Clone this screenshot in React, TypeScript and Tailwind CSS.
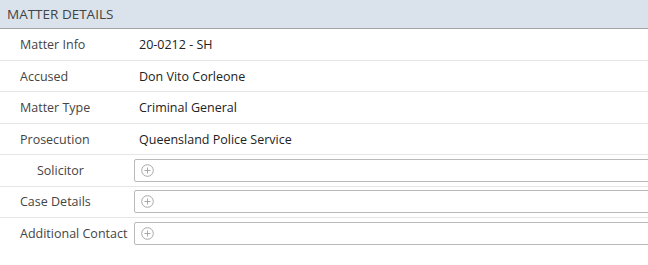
const PlusIcon = () => (
  <svg width="13" height="13" viewBox="0 0 13 13" className="shrink-0">
    <circle cx="6.5" cy="6.5" r="5.8" fill="none" stroke="#a8a8a8" strokeWidth="1" />
    <path d="M6.5 3.5v6M3.5 6.5h6" stroke="#a8a8a8" strokeWidth="1" />
  </svg>
);

const TextRow = ({ label, value }: { label: string; value: string }) => (
  <div className="flex h-[31.5px] items-center border-b border-[#e6e6e6] pt-[3px]">
    <div className="w-[139px] pl-[20px] text-[#444]">{label}</div>
    <div className="text-[#222]">{value}</div>
  </div>
);

const AddRow = ({ label, indent, last }: { label: string; indent?: boolean; last?: boolean }) => (
  <div className={`flex h-[31.5px] items-center ${last ? "" : "border-b border-[#e6e6e6]"}`}>
    <div className={`w-[134px] pt-[2px] text-[#444] ${indent ? "pl-[37px]" : "pl-[20px]"}`}>{label}</div>
    <div className="flex h-[23px] flex-1 items-center rounded-[2px] border border-[#b9b9b9] pl-[6px] -mr-[4px]">
      <PlusIcon />
    </div>
  </div>
);

const App = () => {
  return (
    <div className="h-[265px] w-[648px] overflow-hidden bg-white text-[12.5px] font-['Open_Sans',sans-serif]">
      <div className="flex h-[29px] items-center border-b border-[#a3a3a3] bg-[#dae3ec] pl-[7px] text-[13.5px] text-[#444]">
        MATTER DETAILS
      </div>
      <TextRow label="Matter Info" value="20-0212 - SH" />
      <TextRow label="Accused" value="Don Vito Corleone" />
      <TextRow label="Matter Type" value="Criminal General" />
      <TextRow label="Prosecution" value="Queensland Police Service" />
      <AddRow label="Solicitor" indent />
      <AddRow label="Case Details" />
      <AddRow label="Additional Contact" last />
    </div>
  );
};

export default App;
